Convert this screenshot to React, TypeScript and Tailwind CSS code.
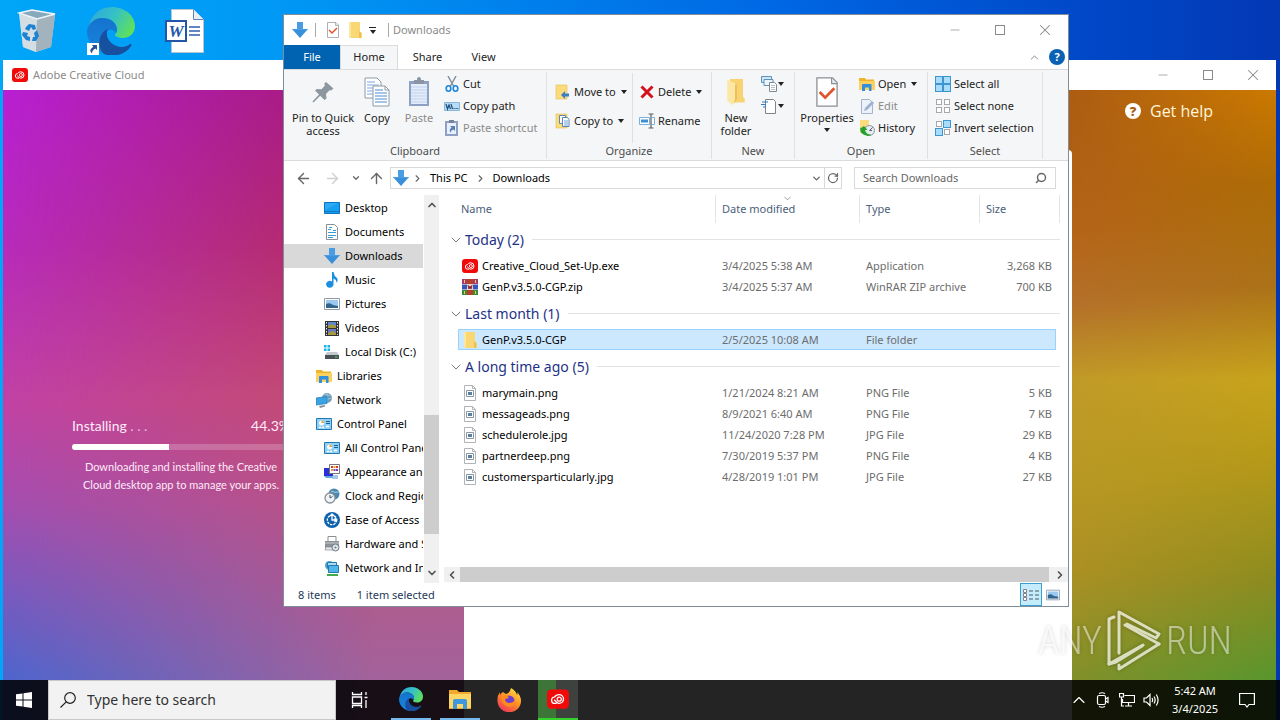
import type { ReactNode } from 'react';
import { ArrowLeft, ArrowRight, ArrowUp, ChevronDown, ChevronLeft, ChevronRight, ChevronUp, Minus, RotateCw, Search, X } from 'lucide-react';

type IconProps = { className?: string };

/* ---------- Icons ---------- */

const DownloadIcon = ({ className = 'size-4' }: IconProps) => (
  <svg viewBox="0 0 16 16" className={className}>
    <path d="M5 0h6v7h5l-8 9-8-9h5z" fill="#3a8fdb" />
    <path d="M5 0h6v7h5l-1 1H1L0 7h5z" fill="#4a9ce3" />
  </svg>
);

const CheckDocIcon = ({ className = 'size-4' }: IconProps) => (
  <svg viewBox="0 0 24 32" className={className} preserveAspectRatio="none">
    <path d="M1 1h17l5 5v25H1z" fill="#fff" stroke="#8a8f96" strokeWidth="1.4" />
    <path d="M17 1v6h6" fill="#e4e8ee" stroke="#8a8f96" strokeWidth="1.2" />
    <path d="M4 16l6 6L20 12" fill="none" stroke="#e0542c" strokeWidth="3" />
  </svg>
);

const FolderIcon = ({ className = 'size-4' }: IconProps) => (
  <svg viewBox="0 0 16 16" className={className}>
    <path d="M2 0h11v10l1.500 1v5H3l-1-1z" fill="#f9d873" />
    <path d="M2 0h2v16l-2-1z" fill="#fce79f" />
    <path d="M12 9l2.500 2v5H12z" fill="#eec04d" />
  </svg>
);

const OpenFolderIcon = ({ className = 'h-7 w-6' }: IconProps) => (
  <svg viewBox="0 0 24 32" className={className}>
    <path d="M5 1h15v20l2 3v4H6z" fill="#f7d372" />
    <path d="M2 2l9 4v19l-3 6-6-5z" fill="#fde7a4" />
    <path d="M11 8l2-1v17l-4 6 2-6z" fill="#e9bd56" />
  </svg>
);

const LibraryIcon = ({ className = 'size-4' }: IconProps) => (
  <svg viewBox="0 0 16 16" className={className}>
    <path d="M0 2h6l1 1.500h8V14H0z" fill="#f0b429" />
    <path d="M0 5h16v9H0z" fill="#fbd25f" />
    <path d="M3 15V9q0-1 1-1h7.500q1 0 1 1v6H10v-3.500H6V15z" fill="#2f8fe0" />
  </svg>
);

const PinIcon = () => (
  <svg viewBox="0 0 24 24" className="size-6">
    <path d="M15 2l7.500 6.500L20 10.500l-1.500-.3L15 14l.5 4.500-2 1.500-4.300-4.300L2.500 22.500 1.500 21.500 8 14.500 4 10.500 6 9l4.500.3L14 5.500l-.8-1.800z" fill="#8d979e" />
  </svg>
);

const CopyIcon = () => (
  <svg viewBox="0 0 26 30" className="h-[30px] w-[26px]">
    <path d="M1 1h12l4 4v16H1z" fill="#fff" stroke="#8c9aa8" />
    <path d="M3 5h8M3 8h12M3 11h12M3 14h12M3 17h12" stroke="#7da7dc" />
    <path d="M9 9h12l4 4v16H9z" fill="#fff" stroke="#8c9aa8" />
    <path d="M21 9v4h4" fill="none" stroke="#8c9aa8" />
    <path d="M11 13h8M11 16h12M11 19h12M11 22h12M11 25h12" stroke="#4a8ad6" />
  </svg>
);

const PasteIcon = () => (
  <svg viewBox="0 0 22 30" className="h-[30px] w-[22px]">
    <path d="M1 4h20v25H1z" fill="#8ea0c4" />
    <path d="M3 7h16v20H3z" fill="#e2ecfa" />
    <path d="M3 10h16M3 13h16M3 16h16M3 19h16M3 22h16M3 25h16" stroke="#c3d3ec" />
    <path d="M6 3h3q0-3 2-3t2 3h3v4H6z" fill="#8a94a3" />
  </svg>
);

const CutIcon = () => (
  <svg viewBox="0 0 16 16" className="size-4">
    <path d="M4 0l5.500 10M12 0L6.500 10" stroke="#7f8c98" strokeWidth="1.400" />
    <ellipse cx="4.500" cy="12.500" rx="2.300" ry="2.700" fill="none" stroke="#1b86d8" strokeWidth="1.600" />
    <ellipse cx="11.500" cy="12.500" rx="2.300" ry="2.700" fill="none" stroke="#1b86d8" strokeWidth="1.600" />
  </svg>
);

const CopyPathIcon = () => (
  <svg viewBox="0 0 16 16" className="size-4">
    <path d="M.5 4.500h15v8H.5z" fill="#b9dcf6" stroke="#84b6de" />
    <path d="M2 6l1.500 5L5 7l1.500 4M7 6l1.500 5" fill="none" stroke="#1f4e7c" strokeWidth="1.200" />
    <path d="M9.500 10.500h1.200M11.500 10.500h1.200M13.300 10.500h1" stroke="#1f4e7c" strokeWidth="1.200" />
  </svg>
);

const PasteShortcutIcon = () => (
  <svg viewBox="0 0 16 16" className="size-4">
    <path d="M1 1h13v15H1z" fill="#8ea0c4" />
    <path d="M3 3h9v11H3z" fill="#e8f0fb" />
    <path d="M5 0h5v3H5z" fill="#76839a" />
    <path d="M6 6h5v5L9.500 9.500Q7 10 6.500 12.500 4.500 10 7.600 7.600z" fill="#5a7db8" />
  </svg>
);

const MoveToIcon = () => (
  <svg viewBox="0 0 16 16" className="size-4">
    <path d="M1 1h11v14H1z" fill="#fbdc7c" stroke="#e6bd52" strokeWidth=".6" />
    <path d="M6 11l4-4v2.500h4v3h-4V15z" fill="#3a7fc4" />
  </svg>
);

const CopyToIcon = () => (
  <svg viewBox="0 0 16 16" className="size-4">
    <path d="M1 1h11v14H1z" fill="#fbdc7c" stroke="#e6bd52" strokeWidth=".6" />
    <path d="M4.500 2.500h6v8h-6z" fill="#fff" stroke="#5b86b8" />
    <path d="M7.500 4.500h5l1.500 2v7H7.500z" fill="#fff" stroke="#5b86b8" />
    <path d="M9 8h4M9 10h4M9 12h4" stroke="#4a8ad6" strokeWidth=".8" />
  </svg>
);

const DeleteIcon = () => (
  <svg viewBox="0 0 16 16" className="size-4">
    <path d="M2.500 2.500l11 11M13.500 2.500l-11 11" stroke="#d4121f" strokeWidth="3" />
  </svg>
);

const RenameIcon = () => (
  <svg viewBox="0 0 16 16" className="size-4">
    <path d="M.5 4.500h10v7H.5zM13 4.500h2.500v7H13" fill="#fff" stroke="#7bb0dc" />
    <path d="M2 6.500h7v3H2z" fill="#3b8fd4" />
    <path d="M9.500 1h5M12 1v14M9.500 15h5" stroke="#5a5f66" strokeWidth="1.200" />
  </svg>
);

const NewItemIcon = () => (
  <svg viewBox="0 0 16 16" className="size-4">
    <path d="M.5.5h10v6H.5z" fill="#cfe6f8" stroke="#5f94b8" />
    <path d="M3 3.500h9v6H3z" fill="#eaf4fc" stroke="#5f94b8" />
    <path d="M8.500 6.500h5l2 2v7h-7z" fill="#fff" stroke="#808890" />
    <path d="M10 9.500h4M10 11.500h4M10 13.500h4" stroke="#a4acb4" strokeWidth=".8" />
  </svg>
);

const EasyAccessIcon = () => (
  <svg viewBox="0 0 16 16" className="size-4">
    <path d="M4.500 1.500h8l2 2v12h-10z" fill="#fff" stroke="#7c848c" />
    <path d="M1 4h6M0 6.500h5M2 9h3" stroke="#2e7fc8" strokeWidth="1.200" />
  </svg>
);

const EditIcon = () => (
  <svg viewBox="0 0 16 16" className="size-4">
    <path d="M2.500 1.500h8l3 3v11h-11z" fill="#edf2fa" stroke="#a5b4cc" />
    <path d="M5 13l1-3 7-7 2 2-7 7z" fill="#9db1d1" />
  </svg>
);

const HistoryIcon = () => (
  <svg viewBox="0 0 16 16" className="size-4">
    <path d="M1 0h9v13H1z" fill="#fbdc7c" />
    <circle cx="10.500" cy="10.500" r="5" fill="#e6ecf0" stroke="#8a949e" />
    <path d="M10.500 10.500l3-3M10.500 10.500h2.500" stroke="#5a6670" />
    <path d="M2 7q-3 7 7 9 3-.5 3-1.500-5 0-6-4.500h2.500L5 6 .5 9z" fill="#25a02f" />
  </svg>
);

const gridSpots = [[1, 1], [9, 1], [1, 9], [9, 9]];

const SelectIcon = ({ filled }: { filled: number[] }) => (
  <svg viewBox="0 0 16 16" className="size-4">
    {gridSpots.map(([x, y], i) => (
      <rect
        key={i}
        x={filled.includes(i) ? x - 0.5 : x + 0.5}
        y={filled.includes(i) ? y - 0.5 : y + 0.5}
        width={filled.includes(i) ? 7 : 5}
        height={filled.includes(i) ? 7 : 5}
        fill={filled.includes(i) ? '#a9dbfa' : '#fff'}
        stroke={filled.includes(i) ? '#3d95d2' : '#a8a8a8'}
      />
    ))}
  </svg>
);

const CloudLogo = ({ className = 'h-[14px] w-4' }: IconProps) => (
  <svg viewBox="0 0 16 14" className={className}>
    <rect width="16" height="14" rx="3" fill="#f00a0a" />
    <g fill="none" stroke="#fff">
      <path d="M7 10.200H5.800a2.300 2.300 0 01-.3-4.600M5.500 5.600Q6.500 3.800 8.800 3.800A3.200 3.200 0 0112 7a3.200 3.200 0 01-3.200 3.200Q8 10.200 7 9.300L5.200 7.600" />
      <circle cx="8.900" cy="7.100" r="1.500" strokeWidth=".9" />
    </g>
  </svg>
);

const DesktopIcon = () => (
  <svg viewBox="0 0 16 16" className="size-4">
    <path d="M.5 2.500h15v11H.5z" fill="#18a0f0" stroke="#0b73c4" />
    <path d="M1 11.500h14" stroke="#1576c0" />
    <path d="M1 10L14 3H1z" fill="#2fabf4" />
  </svg>
);

const DocumentIcon = () => (
  <svg viewBox="0 0 16 16" className="size-4">
    <path d="M2.500.5h8l3 3v12h-11z" fill="#fff" stroke="#8a8f96" />
    <path d="M4 5.500h3M4 8.500h8M4 11.500h8M4 13.500h5M5 3.500h3M9 6.500h3" stroke="#3a9ad4" />
  </svg>
);

const MusicIcon = () => (
  <svg viewBox="0 0 16 16" className="size-4">
    <path d="M8 0h1.500Q10 4 13 6q1.500 2-.5 5 .5-3-3-4.500V12A3.700 3.500 0 118 9.500z" fill="#1a8fe0" />
  </svg>
);

const PicturesIcon = ({ className = 'size-4' }: IconProps) => (
  <svg viewBox="0 0 16 16" className={className}>
    <path d="M.5 2.500h15v11H.5z" fill="#fff" stroke="#8f9aa6" />
    <path d="M2 4h12v8H2z" fill="#9cc9ef" />
    <path d="M2 8q4-2 7 1l5 1v2H2z" fill="#33648c" />
  </svg>
);

const VideosIcon = () => (
  <svg viewBox="0 0 16 16" className="size-4">
    <path d="M1 1h14v15H1z" fill="#333" />
    <path d="M4 2h8v6H4z" fill="#5d86d4" />
    <path d="M4 9h8v6H4z" fill="#6c79c0" />
    <path d="M4 6l4-2 4 2v2H4zM4 13l5-2 3 2v2H4z" fill="#a79a3c" />
    <path d="M2.500 2v13M13.500 2v13" stroke="#e8e8e8" strokeDasharray="1.500 1.500" />
  </svg>
);

const DiskIcon = () => (
  <svg viewBox="0 0 16 16" className="size-4">
    <path d="M0 1h2.500v2.500H0zM3.500 1H6v2.500H3.500zM0 4.500h2.500V7H0zM3.500 4.500H6V7H3.500z" fill="#13b5ea" />
    <path d="M3 8h10l2 3H1z" fill="#c4c9cd" />
    <path d="M1 11h14v4H1z" fill="#4a5156" />
    <path d="M11 13h2.500" stroke="#4be07a" />
  </svg>
);

const NetworkIcon = () => (
  <svg viewBox="0 0 16 16" className="size-4">
    <circle cx="11" cy="6" r="5" fill="#6f9fb8" />
    <path d="M8 2q3 2 7 1M7 7q4 1 9-1M11 1v9" stroke="#9cc2d4" fill="none" />
    <path d="M0 6l11-1.500v7L0 13z" fill="#39a3e4" stroke="#1f78b4" strokeWidth=".7" />
    <path d="M3 14l6-1v1.500L4 16z" fill="#7f8d98" />
  </svg>
);

const ControlPanelIcon = () => (
  <svg viewBox="0 0 16 16" className="size-4">
    <path d="M.5 2.500h15v11H.5z" fill="#8fd0f6" stroke="#2477b0" />
    <circle cx="5.500" cy="7" r="2.500" fill="#fff" />
    <path d="M5.500 7V4.500A2.500 2.500 0 018 7z" fill="#e9a52b" />
    <path d="M10 5.500h4M10 7.500h4" stroke="#1a5f94" />
    <path d="M3 11.500h2M6 11.500h2M10 10.500h3" stroke="#fff" strokeWidth="1.400" />
  </svg>
);

const AppearanceIcon = () => (
  <svg viewBox="0 0 16 16" className="size-4">
    <path d="M0 4h9v8H0z" fill="#2b2fd8" />
    <path d="M0 12h13v2H2z" fill="#5fa8e0" />
    <path d="M5.500.5h10v9h-10z" fill="#fff" stroke="#777" />
    <path d="M7 3h2M12 3h2" stroke="#d83a2c" strokeWidth="1.800" />
    <path d="M9.500 3h2M7 6h2" stroke="#e8a020" strokeWidth="1.800" />
    <path d="M9.500 6h2M12 6h2" stroke="#7a3cc0" strokeWidth="1.800" />
    <path d="M9 11h5v4H8z" fill="#a8c8e8" />
  </svg>
);

const ClockIcon = () => (
  <svg viewBox="0 0 16 16" className="size-4">
    <circle cx="10" cy="6" r="5.500" fill="#4b88ae" />
    <path d="M7 3q4 2 8 1" stroke="#a5cfe2" fill="none" />
    <circle cx="6" cy="10" r="5" fill="#f0f3f5" stroke="#87929a" strokeWidth="1.300" />
    <path d="M6 7v3l2.500-1.500" stroke="#4a545c" fill="none" />
  </svg>
);

const EaseIcon = () => (
  <svg viewBox="0 0 16 16" className="size-4">
    <circle cx="8" cy="8" r="8" fill="#0f62ad" />
    <circle cx="8" cy="8" r="4.700" fill="none" stroke="#fff" strokeWidth="1.300" strokeDasharray="2.400 1" />
    <path d="M8 2v6h4M10.500 6l2 2-2 2M6 4l2-2 2 2" fill="none" stroke="#fff" strokeWidth="1.300" />
  </svg>
);

const HardwareIcon = () => (
  <svg viewBox="0 0 16 16" className="size-4">
    <path d="M4 .5h8v5H4z" fill="#fff" stroke="#8b8f93" />
    <path d="M1 5h14v7H1z" fill="#8a9095" />
    <path d="M1 7h14" stroke="#c9cdd0" />
    <path d="M2 11h7v3H1z" fill="#e5e8ea" stroke="#8b8f93" strokeWidth=".7" />
    <circle cx="11.500" cy="11.500" r="3.500" fill="#dfe5ea" stroke="#6f7b86" />
    <circle cx="11.500" cy="11.500" r="1" fill="#6f7b86" />
  </svg>
);

const InternetIcon = () => (
  <svg viewBox="0 0 16 16" className="size-4">
    <circle cx="5.500" cy="5.500" r="4.500" fill="#4ea7cf" />
    <path d="M3.500 2.500h9v5h-9z" fill="#a9dcf4" stroke="#2578ac" />
    <path d="M4.500 5.500h10v7h-10z" fill="#4fb6ea" stroke="#2578ac" />
    <path d="M3 14h11v2H3z" fill="#44a948" />
  </svg>
);

const RarIcon = () => (
  <svg viewBox="0 0 16 16" className="size-4">
    <path d="M0 0h16v5H0z" fill="#a83a6c" />
    <path d="M0 5.500h16v5H0z" fill="#3656b8" />
    <path d="M0 11h16v5H0z" fill="#3d8b3a" />
    <path d="M5 0h6v16H5z" fill="#b5402c" />
    <path d="M5 5h6v6H5z" fill="#e8d7c8" />
    <path d="M6 6l1 4 1-3 1 3 1-4" fill="none" stroke="#8a2030" />
    <path d="M2.500 1v3M2.500 12v3M13.500 1v3M13.500 12v3" stroke="#f0c860" />
  </svg>
);

const ImageFileIcon = () => (
  <svg viewBox="0 0 16 16" className="size-4">
    <path d="M2.500.5h8l3 3v12h-11z" fill="#fff" stroke="#b0b4b9" />
    <path d="M10.500.5v3h3" fill="none" stroke="#b0b4b9" />
    <path d="M4.500 5.500h7v6h-7z" fill="#fff" stroke="#8996a3" />
    <path d="M6 7h4v3H6z" fill="#5c7f9f" />
  </svg>
);

const EdgeLogo = ({ className = 'size-6' }: IconProps) => (
  <svg viewBox="0 0 48 48" className={className}>
    <defs>
      <linearGradient id="edgeTop" x1="0" y1=".2" x2="1" y2=".6">
        <stop offset="0" stopColor="#2ea8dc" />
        <stop offset=".5" stopColor="#35c1c6" />
        <stop offset="1" stopColor="#5fe05a" />
      </linearGradient>
      <linearGradient id="edgeSide" x1="0" y1="0" x2="0" y2="1">
        <stop offset="0" stopColor="#1373cf" />
        <stop offset="1" stopColor="#1a86dd" />
      </linearGradient>
    </defs>
    <path d="M1 22C3 9 12 0 25 0c13 0 23 9 23 19 0 8-6 12-12 12-5 0-8-2-8-3s2-2 2-5c0-7-6-12-14-12C9 11 4 15 1 22z" fill="url(#edgeTop)" />
    <path d="M0 24c1-7 7-13 15-13 9 0 15 5 15 12l-1 3c-3-5-10-4-12 1-3 9 4 18 15 20-5 2-12 1-17-1C6 42 0 34 0 24z" fill="url(#edgeSide)" />
    <path d="M17 47C9 40 12 25 21 22c-4 8 3 17 13 18 5 0 8-2 9-3 2 0 2 1 1 2-5 8-16 12-27 8z" fill="#17509f" />
  </svg>
);

const FirefoxLogo = () => (
  <svg viewBox="0 0 24 24" className="size-6">
    <defs>
      <linearGradient id="fox" x1=".8" y1="0" x2=".2" y2="1">
        <stop offset="0" stopColor="#ffe14a" />
        <stop offset=".45" stopColor="#ff9422" />
        <stop offset="1" stopColor="#f0305c" />
      </linearGradient>
    </defs>
    <path d="M14 0q5 3 6 7 1-1 0-3 4 4 4 9a11.500 11 0 01-23.500 0Q0 8 3 4v3q1-2 3-3 1 1 3 2 4-1 5-6z" fill="url(#fox)" />
    <circle cx="12" cy="13" r="5.500" fill="#6b3fd0" />
    <path d="M4 9q4-3 8 0-1 2-4 2 0 4 5 4 3 0 5-3 0 7-6 7-7-1-8-10z" fill="#ff8a1e" />
  </svg>
);

const ExplorerLogo = () => (
  <svg viewBox="0 0 24 24" className="size-6">
    <path d="M1 3h8l2 2h12v17H1z" fill="#f0a92a" />
    <path d="M1 7h22v14H1z" fill="#fdd766" />
    <path d="M5 22v-8q0-2 2-2h10q2 0 2 2v8h-4v-5H9v5z" fill="#3f97dd" />
  </svg>
);

const RecycleBin = () => (
  <svg viewBox="0 0 40 44" className="h-11 w-10">
    <path d="M2 4l36 2-4 32-15 5-13-5z" fill="#b9c9d3" />
    <path d="M2 4l18 6-1 33-13-5z" fill="#d3dde4" />
    <path d="M20 10l18-4-4 32-15 5z" fill="#a3b3bd" />
    <path d="M2 4l13-3 23 4-18 5z" fill="#86a9bd" stroke="#eef4f8" strokeWidth="1.500" />
    <g fill="#1b83d2">
      <path d="M9 18l3-3 6 1 1 4-3 1-2-3-2 4-4-2zM20 21l2 6-3 5h-4l1-4h2l-1-4zM6 23l5 1-1 3 3 1v4l-4-1-4-5z" />
    </g>
  </svg>
);

const WordFile = () => (
  <svg viewBox="0 0 40 44" className="h-11 w-10">
    <path d="M6.500.5h22l10 10v33h-32z" fill="#fff" stroke="#b9c4d0" />
    <path d="M28.500.5v10h10" fill="#e7eef6" stroke="#5b84bd" />
    <path d="M24 18h11M24 22h11M24 26h11" stroke="#2f5fb0" strokeWidth="1.500" />
    <path d="M1 12h20v20H1z" fill="#fff" stroke="#2456a8" strokeWidth="2" />
    <text x="11" y="28" textAnchor="middle" fontSize="17" fontWeight="700" fontStyle="italic" fill="#2456a8" fontFamily="Liberation Serif, serif">W</text>
  </svg>
);

const ShortcutBadge = () => (
  <svg viewBox="0 0 12 12" className="absolute bottom-0 left-0 size-3">
    <path d="M0 0h12v12H0z" fill="#fff" />
    <path d="M5 2h5v5L8.300 5.500Q5 7 5 10.500 1 7 6.300 3.700z" fill="#24509c" />
  </svg>
);

const PlayMark = () => (
  <svg viewBox="0 0 54 62" className="h-[62px] w-[54px]">
    <g fill="none" stroke="#fff" strokeWidth="3" strokeLinejoin="round" strokeLinecap="round">
      <path d="M12 43V2l40 22-3 4-29-14" />
      <path d="M7 7l-5 2v45l34-19M18 15l34 19" />
      <path d="M52 34L12 59v-4" />
      <path d="M2 54l7-2 26-16" />
    </g>
  </svg>
);

/* ---------- Data ---------- */

const navItems = [
  { label: 'Desktop', icon: DesktopIcon, nested: true },
  { label: 'Documents', icon: DocumentIcon, nested: true },
  { label: 'Downloads', icon: DownloadIcon, nested: true, active: true },
  { label: 'Music', icon: MusicIcon, nested: true },
  { label: 'Pictures', icon: PicturesIcon, nested: true },
  { label: 'Videos', icon: VideosIcon, nested: true },
  { label: 'Local Disk (C:)', icon: DiskIcon, nested: true },
  { label: 'Libraries', icon: LibraryIcon },
  { label: 'Network', icon: NetworkIcon },
  { label: 'Control Panel', icon: ControlPanelIcon },
  { label: 'All Control Panel Items', icon: ControlPanelIcon, nested: true },
  { label: 'Appearance and Personalization', icon: AppearanceIcon, nested: true },
  { label: 'Clock and Region', icon: ClockIcon, nested: true },
  { label: 'Ease of Access', icon: EaseIcon, nested: true },
  { label: 'Hardware and Sound', icon: HardwareIcon, nested: true },
  { label: 'Network and Internet', icon: InternetIcon, nested: true },
];

const groups = [
  {
    title: 'Today (2)',
    files: [
      { name: 'Creative_Cloud_Set-Up.exe', date: '3/4/2025 5:38 AM', type: 'Application', size: '3,268 KB', icon: CloudLogo },
      { name: 'GenP.v3.5.0-CGP.zip', date: '3/4/2025 5:37 AM', type: 'WinRAR ZIP archive', size: '700 KB', icon: RarIcon },
    ],
  },
  {
    title: 'Last month (1)',
    files: [{ name: 'GenP.v3.5.0-CGP', date: '2/5/2025 10:08 AM', type: 'File folder', size: '', icon: FolderIcon, selected: true }],
  },
  {
    title: 'A long time ago (5)',
    files: [
      { name: 'marymain.png', date: '1/21/2024 8:21 AM', type: 'PNG File', size: '5 KB', icon: ImageFileIcon },
      { name: 'messageads.png', date: '8/9/2021 6:40 AM', type: 'PNG File', size: '7 KB', icon: ImageFileIcon },
      { name: 'schedulerole.jpg', date: '11/24/2020 7:28 PM', type: 'JPG File', size: '29 KB', icon: ImageFileIcon },
      { name: 'partnerdeep.png', date: '7/30/2019 5:37 PM', type: 'PNG File', size: '4 KB', icon: ImageFileIcon },
      { name: 'customersparticularly.jpg', date: '4/28/2019 1:01 PM', type: 'JPG File', size: '27 KB', icon: ImageFileIcon },
    ],
  },
];

/* ---------- Shared pieces ---------- */

function WindowButtons() {
  return (
    <div className="ml-auto flex h-full text-[#8a8a8a]">
      <button aria-label="Minimize" className="flex w-[45px] items-center justify-center"><Minus size={14} strokeWidth={1.2} /></button>
      <button aria-label="Maximize" className="flex w-[45px] items-center justify-center"><span className="size-[10px] border border-[#8a8a8a]" /></button>
      <button aria-label="Close" className="flex w-[46px] items-center justify-center"><X size={18} strokeWidth={1.4} /></button>
    </div>
  );
}

const Caret = () => <span className="border-x-[3px] border-t-[4px] border-x-transparent border-t-[#222]" />;

function SmallButton({ icon, label, caret, disabled }: { icon: ReactNode; label: string; caret?: boolean; disabled?: boolean }) {
  return (
    <button disabled={disabled} className="flex h-[22px] items-center gap-[3px] whitespace-nowrap disabled:text-[#8a8a8a]">
      {icon}
      <span>{label}</span>
      {caret && <span className="ml-[2px] flex"><Caret /></span>}
    </button>
  );
}

function BigButton({ icon, label, className, disabled, caret }: { icon: ReactNode; label: string; className: string; disabled?: boolean; caret?: boolean }) {
  return (
    <button disabled={disabled} className={`flex flex-col items-center leading-[13px] disabled:text-[#8a8a8a] ${className}`}>
      <span className="flex h-[38px] items-center justify-center">{icon}</span>
      <span>{label}</span>
      {caret && <span className="mt-1 flex"><Caret /></span>}
    </button>
  );
}

function RibbonGroup({ title, className, children }: { title: string; className: string; children: ReactNode }) {
  return (
    <div className={`mt-[2px] mb-px flex shrink-0 flex-col border-r border-[#dfe0e2] ${className}`}>
      <div className="flex flex-1 pt-px">{children}</div>
      <div className="h-4 text-center leading-4 text-[#4d4d4d]">{title}</div>
    </div>
  );
}

function Ribbon() {
  return (
    <div className="flex h-[92px] shrink-0 border-y border-[#dadbdc] bg-[#f5f6f7] text-[#222]">
      <RibbonGroup title="Clipboard" className="w-[263px]">
        <BigButton icon={<PinIcon />} label="Pin to Quick access" className="ml-[6px] w-[66px]" />
        <BigButton icon={<CopyIcon />} label="Copy" className="w-[42px]" />
        <BigButton icon={<PasteIcon />} label="Paste" className="w-[42px]" disabled />
        <div className="ml-1">
          <SmallButton icon={<CutIcon />} label="Cut" />
          <SmallButton icon={<CopyPathIcon />} label="Copy path" />
          <SmallButton icon={<PasteShortcutIcon />} label="Paste shortcut" disabled />
        </div>
      </RibbonGroup>
      <RibbonGroup title="Organize" className="w-[165px]">
        <div className="ml-2 flex w-[78px] flex-col gap-[7px] border-r border-[#dfe0e2] pt-2">
          <SmallButton icon={<MoveToIcon />} label="Move to" caret />
          <SmallButton icon={<CopyToIcon />} label="Copy to" caret />
        </div>
        <div className="ml-[6px] flex flex-col gap-[7px] pt-2">
          <SmallButton icon={<DeleteIcon />} label="Delete" caret />
          <SmallButton icon={<RenameIcon />} label="Rename" />
        </div>
      </RibbonGroup>
      <RibbonGroup title="New" className="w-[83px]">
        <BigButton icon={<OpenFolderIcon />} label="New folder" className="ml-1 w-10" />
        <div className="ml-[5px]">
          <button aria-label="New item" className="flex h-[22px] items-center gap-[1px]"><NewItemIcon /><Caret /></button>
          <button aria-label="Easy access" className="flex h-[22px] items-center gap-[1px]"><EasyAccessIcon /><Caret /></button>
        </div>
      </RibbonGroup>
      <RibbonGroup title="Open" className="w-[133px]">
        <BigButton icon={<CheckDocIcon className="h-[30px] w-[22px]" />} label="Properties" className="ml-1 w-[56px]" caret />
        <div className="ml-1">
          <SmallButton icon={<LibraryIcon />} label="Open" caret />
          <SmallButton icon={<EditIcon />} label="Edit" disabled />
          <SmallButton icon={<HistoryIcon />} label="History" />
        </div>
      </RibbonGroup>
      <RibbonGroup title="Select" className="w-[115px]">
        <div className="ml-[7px]">
          <SmallButton icon={<SelectIcon filled={[0, 1, 2, 3]} />} label="Select all" />
          <SmallButton icon={<SelectIcon filled={[]} />} label="Select none" />
          <SmallButton icon={<SelectIcon filled={[1, 2]} />} label="Invert selection" />
        </div>
      </RibbonGroup>
    </div>
  );
}

function FileTable() {
  return (
    <table className="w-full table-fixed border-separate border-spacing-0 text-left whitespace-nowrap">
      <colgroup>
        <col className="w-2" />
        <col />
        <col className="w-[144px]" />
        <col className="w-[120px]" />
        <col className="w-[76px]" />
        <col className="w-1" />
      </colgroup>
      <thead>
        <tr className="h-7 text-[#4c607a]">
          <th colSpan={2} className="border-r border-[#e5e5e5] pl-[11px] font-normal">Name</th>
          <th className="relative border-r border-[#e5e5e5] pl-[6px] font-normal">
            Date modified
            <ChevronDown size={11} strokeWidth={1.5} className="absolute -top-[2px] left-[66px] text-[#777]" />
          </th>
          <th className="border-r border-[#e5e5e5] pl-[6px] font-normal">Type</th>
          <th colSpan={2} className="border-r border-[#e5e5e5] pl-[6px] font-normal">Size</th>
        </tr>
      </thead>
      {groups.map((group) => (
        <tbody key={group.title}>
          <tr>
            <th colSpan={6} className="h-8 pt-px font-normal">
              <button className="flex w-full items-center text-sm text-[#1e3287]">
                <ChevronDown size={16} strokeWidth={1.5} className="-ml-[2px] mr-px text-[#777]" />
                {group.title}
                <span className="ml-2 h-px flex-1 bg-[#e2e2e2]" />
              </button>
            </th>
          </tr>
          {group.files.map((file) => {
            const Icon = file.icon;
            const picked = 'selected' in file;
            const tone = picked ? 'border-y border-[#99d1ff] bg-[#cce8ff]' : '';
            return (
              <tr key={file.name} className="h-[21px] text-[#6d6d6d]">
                <td />
                <td className={`${tone} ${picked ? 'border-l pl-[3px]' : 'pl-1'}`}>
                  <span className="flex items-center gap-1 text-black"><Icon />{file.name}</span>
                </td>
                <td className={`pl-[6px] ${tone}`}>{file.date}</td>
                <td className={`pl-[6px] ${tone}`}>{file.type}</td>
                <td className={`pr-1 text-right ${tone} ${picked ? 'border-r' : ''}`}>{file.size}</td>
                <td />
              </tr>
            );
          })}
        </tbody>
      ))}
    </table>
  );
}

function ExplorerWindow() {
  return (
    <section className="absolute top-[14px] right-[211px] bottom-[113px] left-[283px] flex flex-col border border-[#7f8c99] bg-white font-['Noto_Sans',sans-serif] text-[11px] leading-4 text-black">
      {/* Title bar */}
      <div className="flex h-[30px] shrink-0 items-center pl-2">
        <DownloadIcon />
        <span className="mx-[7px] h-[14px] w-px bg-[#a8a8a8]" />
        <CheckDocIcon className="ml-1 h-4 w-3" />
        <FolderIcon className="ml-2 size-4" />
        <span className="ml-[6px] flex flex-col items-center gap-[2px]">
          <span className="h-px w-[7px] bg-[#222]" />
          <Caret />
        </span>
        <span className="mr-1 ml-3 h-[14px] w-px bg-[#a8a8a8]" />
        <h1 className="text-[#8a8a8a]">Downloads</h1>
        <WindowButtons />
      </div>

      {/* Tabs */}
      <div className="flex h-6 shrink-0 items-stretch text-[#222]">
        <button className="w-14 bg-[#0063b1] text-white">File</button>
        <button className="-mb-px w-[58px] border-x border-t border-[#dadbdc] bg-[#f5f6f7] pb-[2px]">Home</button>
        <button className="w-[59px]">Share</button>
        <button className="w-[53px]">View</button>
        <div className="ml-auto flex items-center gap-2 pr-[3px]">
          <ChevronUp size={13} strokeWidth={1.8} className="text-[#888]" />
          <button aria-label="Help" className="flex size-4 items-center justify-center rounded-full bg-[#0b62b5] font-bold text-white">?</button>
        </div>
      </div>

      <Ribbon />

      {/* Address bar */}
      <div className="flex h-[34px] shrink-0 items-center pr-3 pl-[11px] text-[#666]">
        <button aria-label="Back"><ArrowLeft size={17} /></button>
        <button aria-label="Forward" className="ml-3 text-[#d0d0d0]"><ArrowRight size={17} /></button>
        <button aria-label="Recent locations" className="ml-[10px]"><ChevronDown size={10} strokeWidth={3} /></button>
        <button aria-label="Up" className="ml-[7px]"><ArrowUp size={17} /></button>
        <div className="ml-[5px] flex h-[22px] flex-1 items-center border border-[#d9d9d9] pl-[2px] text-black">
          <DownloadIcon className="size-4" />
          <ChevronRight size={11} strokeWidth={2.5} className="ml-[3px] text-[#666]" />
          <button className="px-[7px]">This PC</button>
          <ChevronRight size={11} strokeWidth={2.5} className="text-[#666]" />
          <button className="px-[7px]">Downloads</button>
          <button aria-label="Previous locations" className="ml-auto pr-[2px] text-[#666]"><ChevronDown size={11} strokeWidth={3} /></button>
          <button aria-label="Refresh" className="flex h-full items-center border-l border-[#d9d9d9] px-[2px] text-[#666]"><RotateCw size={12} strokeWidth={2.5} /></button>
        </div>
        <label className="ml-3 flex h-[22px] w-[202px] items-center border border-[#d9d9d9] px-2">
          <input aria-label="Search Downloads" placeholder="Search Downloads" className="min-w-0 flex-1 outline-none placeholder:text-[#666]" />
          <Search size={12} strokeWidth={3} className="-scale-x-100" />
        </label>
      </div>

      {/* Panes */}
      <div className="flex min-h-0 flex-1">
        <nav className="flex w-[139px] flex-col overflow-hidden pt-px">
          {navItems.map(({ label, icon: Icon, nested, active }) => (
            <a key={label} href="#" className={`flex h-6 shrink-0 items-center gap-[5px] whitespace-nowrap ${nested ? 'pl-10' : 'pl-8'} ${active ? 'bg-[#d9d9d9]' : ''}`}>
              <span className="shrink-0"><Icon /></span>
              {label}
            </a>
          ))}
        </nav>
        <div className="ml-px flex w-[15px] flex-col items-center bg-[#f0f0f0] py-1 text-[#555]">
          <ChevronUp size={12} strokeWidth={3.5} />
          <div className="mt-auto mb-[33px] h-[119px] w-full bg-[#cdcdcd]" />
          <ChevronDown size={12} strokeWidth={3.5} />
        </div>
        <main className="ml-[5px] flex min-w-0 flex-1 flex-col">
          <div className="flex-1 overflow-hidden pr-2 pl-[6px]">
            <FileTable />
          </div>
          <div className="mb-px flex h-[15px] shrink-0 items-center gap-[2px] bg-[#f0f0f0] px-[2px] text-[#555]">
            <ChevronLeft size={12} strokeWidth={3.5} />
            <div className="h-full flex-1 bg-[#cdcdcd]" />
            <ChevronRight size={12} strokeWidth={3.5} className="ml-[3px]" />
          </div>
        </main>
      </div>

      {/* Status bar */}
      <div className="flex h-[23px] shrink-0 items-center pl-[14px] text-[#1e395b]">
        <span>8 items</span>
        <span className="ml-[21px]">1 item selected</span>
        <button aria-label="Details view" className="ml-auto flex h-full w-[22px] items-center justify-center border border-[#3a9fd0] bg-[#c5ecfb]">
          <svg viewBox="0 0 16 12" className="h-3 w-4">
            <path d="M.5.5h3v3h-3zM.5 4.500h3v3h-3zM.5 8.500h3v3h-3z" fill="#fff" stroke="#8a7f88" />
            <path d="M6 2h4M6 6h4M6 10h4M12 2h4M12 6h4M12 10h4" stroke="#4a5a64" />
          </svg>
        </button>
        <button aria-label="Large icons view" className="mr-2 ml-1"><PicturesIcon className="size-[14px]" /></button>
      </div>
    </section>
  );
}

function AdobeWindow() {
  return (
    <section className="absolute top-[60px] right-1 bottom-0 left-[3px] flex flex-col bg-white font-[Lato,sans-serif]">
      <div className="flex h-[30px] shrink-0 items-center pl-[9px] font-['Noto_Sans',sans-serif] text-[11px] text-[#8a8a8a]">
        <CloudLogo />
        <span className="ml-[5px]">Adobe Creative Cloud</span>
        <WindowButtons />
      </div>
      <div className="flex flex-1 bg-[#ae5e14]">
        {/* Install progress, the part past the panel edge sits under the file window */}
        <div className="relative w-[461px] shrink-0 bg-linear-[to_bottom,#a51a70,#b52c5c_25%,#c34c68_48%,#bf527c_62%,#a3629a_93%] text-[#ffeaf8]">
          <div className="absolute inset-0 bg-linear-[to_bottom,#b81fd2,#b62bba_25%,#c142a4_50%,#a34eb0_66%,#4f65cc_93%] [mask-image:linear-gradient(to_right,black,transparent_80%)]" />
          <div className="relative mt-[327px] ml-[69px] w-[218px]">
            <div className="flex justify-between text-sm leading-[18px]">
              <span>Installing <span className="opacity-70">. . .</span></span>
              <span>44.3%</span>
            </div>
            <div className="mt-[9px] h-[6px] overflow-hidden rounded-full bg-white/20">
              <div className="h-full bg-white" style={{ width: '44.3%' }} />
            </div>
            <p className="mt-[8px] text-center text-[11px] leading-[18px]">
              Downloading and installing the Creative
              <br />
              Cloud desktop app to manage your apps.
            </p>
          </div>
        </div>
        <div className="mt-[60px] flex-1 rounded-t bg-white" />
        {/* Help */}
        <div className="relative w-[204px] shrink-0 bg-linear-[to_bottom,#cc7a00,#ae6c06_15%,#ac7218_31%,#c8a41c_46%,#b89a18_58%,#8c8c20_78%,#5a962e_93%] text-[#fff6dc]">
          <div className="absolute inset-0 bg-linear-[to_bottom,#ac5c12,#b46418_22%,#b4702a_34%,#c09a28_46%,#b89824_62%,#ac9024_76%,#83902a_93%] [mask-image:linear-gradient(to_right,black,transparent)]" />
          <button className="relative mt-[10px] ml-[53px] flex items-center gap-[9px] font-['Open_Sans',sans-serif] text-base leading-[22px]">
            <span className="flex size-4 items-center justify-center rounded-full bg-white text-[13px] font-extrabold text-[#a85f10]">?</span>
            Get help
          </button>
        </div>
      </div>
    </section>
  );
}

function Taskbar() {
  return (
    <footer className="absolute inset-x-0 bottom-0 flex h-10 items-center bg-black/86 font-['Noto_Sans',sans-serif] text-white">
      <button aria-label="Start" className="flex w-12 justify-center">
        <svg viewBox="0 0 16 16" className="size-4">
          <path d="M0 2.300l6.500-.9v6.100H0zM7.500 1.200L16 0v7.500H7.500zM0 8.500h6.500v6.100L0 13.700zM7.500 8.500H16V16l-8.500-1.200z" fill="#fff" />
        </svg>
      </button>
      <label className="flex h-full w-72 items-center gap-[11px] border border-[#c8c8c8] bg-[#f2f2f2] pl-[11px] text-[#222]">
        <svg viewBox="0 0 16 16" className="size-4" fill="none" stroke="#222" strokeWidth="1.200">
          <circle cx="10" cy="6" r="5.300" />
          <path d="M6.200 9.800L.5 15.500" />
        </svg>
        <input aria-label="Type here to search" placeholder="Type here to search" className="w-48 text-sm outline-none placeholder:text-[#333]" />
      </label>
      <button aria-label="Task view" className="flex w-12 justify-center">
        <svg viewBox="0 0 18 16" className="h-4 w-[18px]" fill="none" stroke="#fff" strokeWidth="1.300">
          <path d="M1.500 0v2.500h9V0M1.500 5h9v6.500h-9zM1.500 16v-2.500h9V16M15 0v3M15 8v8M13.500 5.500h3" />
        </svg>
      </button>
      <div className="ml-[7px] flex h-full gap-[9px]">
        <button aria-label="Edge" className="flex w-10 items-center justify-center border-b-2 border-[#76b9ed]"><EdgeLogo /></button>
        <button aria-label="File Explorer" className="flex w-10 items-center justify-center border-b-2 border-[#76b9ed]"><ExplorerLogo /></button>
        <button aria-label="Firefox" className="flex w-10 items-center justify-center"><FirefoxLogo /></button>
        <button aria-label="Creative Cloud" className="flex w-10 items-center justify-center border-b-2 border-[#35d12c] bg-linear-[to_right,#3d7539_45%,#3e423e_45%]"><CloudLogo className="h-5 w-[22px]" /></button>
      </div>
      <div className="ml-auto flex h-full items-center pr-[21px]">
        <button aria-label="Hidden icons" className="flex w-6 justify-center"><ChevronUp size={20} strokeWidth={1.4} /></button>
        <button aria-label="Meet now" className="flex w-6 justify-center">
          <svg viewBox="0 0 16 16" className="size-4" fill="none" stroke="#fff" strokeWidth="1.200">
            <path d="M4 1.500Q7 0 10 1.500M4 14.500Q7 16 10 14.500" />
            <rect x="2.500" y="3.500" width="8" height="9" rx="1.500" />
            <path d="M10.500 7l2.500-1.500v5L10.500 9" />
          </svg>
        </button>
        <button aria-label="Network" className="flex w-6 justify-center">
          <svg viewBox="0 0 16 16" className="size-4" fill="none" stroke="#fff" strokeWidth="1.200">
            <path d="M5.500 3.500h10v7h-12V7M9.500 10.500v3M6 14h7M.5 1.500h4v3.500h-4zM2.500 5v9H5" />
          </svg>
        </button>
        <button aria-label="Volume" className="flex w-6 justify-center">
          <svg viewBox="0 0 17 16" className="h-4 w-[17px]" fill="none" stroke="#fff" strokeWidth="1.200">
            <path d="M1 6h2.500L7 2.500v11L3.500 10H1zM9 6q1.300 2 0 4M11 4.500q2.300 3.500 0 7M13.300 2.500q3.500 5.500 0 11" />
          </svg>
        </button>
        <button className="w-16 text-center text-[11px] leading-[18px]">
          5:42 AM
          <br />
          3/4/2025
        </button>
        <button aria-label="Notifications" className="ml-2 flex w-6 justify-center">
          <svg viewBox="0 0 16 16" className="size-4" fill="none" stroke="#fff" strokeWidth="1.200">
            <path d="M.6 1.500h14.800v11H10L8 15l-2-2.500H.6z" />
          </svg>
        </button>
      </div>
    </footer>
  );
}

export default function App() {
  return (
    <div className="relative h-screen w-full overflow-hidden bg-linear-[to_right,#00a6f8,#0098f4_22%,#0068e4_60%,#0048c8_85%,#0338b4]">
      {/* Desktop shortcuts */}
      <div className="flex pt-[9px]">
        <div className="flex w-[74px] justify-center"><RecycleBin /></div>
        <div className="flex w-[74px] justify-center">
          <span className="relative -mt-[2px]"><EdgeLogo className="size-12" /><ShortcutBadge /></span>
        </div>
        <div className="flex w-[74px] justify-center"><WordFile /></div>
      </div>

      <AdobeWindow />
      <ExplorerWindow />
      <Taskbar />

      {/* Watermark */}
      <div className="pointer-events-none absolute right-[48px] bottom-[48px] flex items-center gap-[5px] font-['Roboto_Condensed',Roboto,sans-serif] text-[38px] font-light text-white/70 opacity-70 drop-shadow-[0_0_2px_rgba(0,0,0,0.35)]">
        ANY
        <PlayMark />
        RUN
      </div>
    </div>
  );
}
